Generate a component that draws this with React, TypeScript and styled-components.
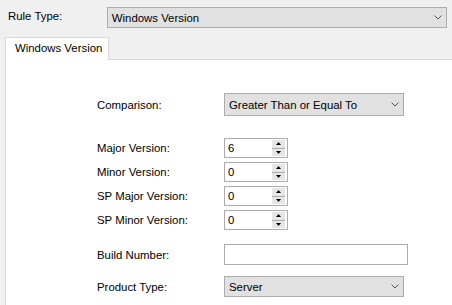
import React from "react";
import styled, { createGlobalStyle } from "styled-components";

const Global = createGlobalStyle`
  html, body { margin: 0; padding: 0; background: #f0f0f0; }
  body { font-family: "Liberation Sans", Arial, sans-serif; font-size: 11.4px; color: #000; }
  * { box-sizing: border-box; }
`;

const Page = styled.div`
  width: 452px;
  height: 305px;
  overflow: hidden;
  background: #f0f0f0;
  display: flex;
  flex-direction: column;
`;

const TopRow = styled.div`
  display: flex;
  align-items: center;
  padding: 7px 5px 0 8px;
  height: 28px;
`;

const TopLabel = styled.div`
  width: 99px;
  margin-top: -3px;
`;

const Combo = styled.div<{ $w: number; $h: number }>`
  width: ${(p) => p.$w}px;
  height: ${(p) => p.$h}px;
  background: #e1e1e1;
  border: 1px solid #adadad;
  display: flex;
  align-items: center;
  justify-content: space-between;
  padding: 0 4px 0 4px;
`;

const ComboText = styled.span`
  white-space: nowrap;
`;

const Chevron = () => (
  <svg width="8" height="5" viewBox="0 0 8 5">
    <path d="M0.5 0.5 L4 4 L7.5 0.5" fill="none" stroke="#555" strokeWidth="1" />
  </svg>
);

const TabStrip = styled.div`
  display: flex;
  padding: 9px 0 0 5px;
  height: 31px;
`;

const Tab = styled.div`
  width: 104px;
  height: 23px;
  background: #fff;
  border: 1px solid #d9d9d9;
  border-bottom: none;
  padding: 4px 0 0 9px;
  white-space: nowrap;
  position: relative;
  z-index: 1;
`;

const Panel = styled.div`
  flex: 1;
  margin-left: 5px;
  background: #fff;
  border-top: 1px solid #d9d9d9;
  border-left: 1px solid #d9d9d9;
  padding: 33px 0 0 91px;
  display: flex;
  flex-direction: column;
`;

const Row = styled.div<{ $h: number; $gap: number }>`
  display: grid;
  grid-template-columns: 127px auto;
  align-items: center;
  height: ${(p) => p.$h}px;
  margin-top: ${(p) => p.$gap}px;
`;

const Label = styled.span`
  white-space: nowrap;
`;

const Spin = styled.div`
  width: 64px;
  height: 20px;
  background: #fff;
  border: 1px solid #adadad;
  display: flex;
  align-items: center;
  justify-content: space-between;
  padding: 1px 2px 1px 3px;
`;

const SpinButtons = styled.div`
  width: 13px;
  height: 100%;
  display: flex;
  flex-direction: column;
  background: #adadad;
  gap: 1px;
`;

const SpinButton = styled.div`
  flex: 1;
  background: #e6e6e6;
  display: flex;
  align-items: center;
  justify-content: center;
`;

const TextBox = styled.div`
  width: 184px;
  height: 21px;
  background: #fff;
  border: 1px solid #adadad;
`;

const Up = () => (
  <svg width="5" height="3" viewBox="0 0 5 3">
    <path d="M2.5 0 L5 3 L0 3 Z" fill="#000" />
  </svg>
);
const Down = () => (
  <svg width="5" height="3" viewBox="0 0 5 3">
    <path d="M0 0 L5 0 L2.5 3 Z" fill="#000" />
  </svg>
);

const SpinBox = ({ value }: { value: string }) => (
  <Spin>
    <span>{value}</span>
    <SpinButtons>
      <SpinButton><Up /></SpinButton>
      <SpinButton><Down /></SpinButton>
    </SpinButtons>
  </Spin>
);

const spins = [
  { label: "Major Version:", value: "6", gap: 22 },
  { label: "Minor Version:", value: "0", gap: 4 },
  { label: "SP Major Version:", value: "0", gap: 4 },
  { label: "SP Minor Version:", value: "0", gap: 4 },
];

export default function App() {
  return (
    <Page>
      <Global />
      <TopRow>
        <TopLabel>Rule Type:</TopLabel>
        <Combo $w={341} $h={21}>
          <ComboText>Windows Version</ComboText>
          <Chevron />
        </Combo>
      </TopRow>
      <TabStrip>
        <Tab>Windows Version</Tab>
      </TabStrip>
      <Panel>
        <Row $h={23} $gap={0}>
          <Label>Comparison:</Label>
          <Combo $w={180} $h={23}>
            <ComboText>Greater Than or Equal To</ComboText>
            <Chevron />
          </Combo>
        </Row>
        {spins.map((s) => (
          <Row key={s.label} $h={20} $gap={s.gap}>
            <Label>{s.label}</Label>
            <SpinBox value={s.value} />
          </Row>
        ))}
        <Row $h={21} $gap={14}>
          <Label>Build Number:</Label>
          <TextBox />
        </Row>
        <Row $h={21} $gap={11}>
          <Label>Product Type:</Label>
          <Combo $w={180} $h={21}>
            <ComboText>Server</ComboText>
            <Chevron />
          </Combo>
        </Row>
      </Panel>
    </Page>
  );
}
